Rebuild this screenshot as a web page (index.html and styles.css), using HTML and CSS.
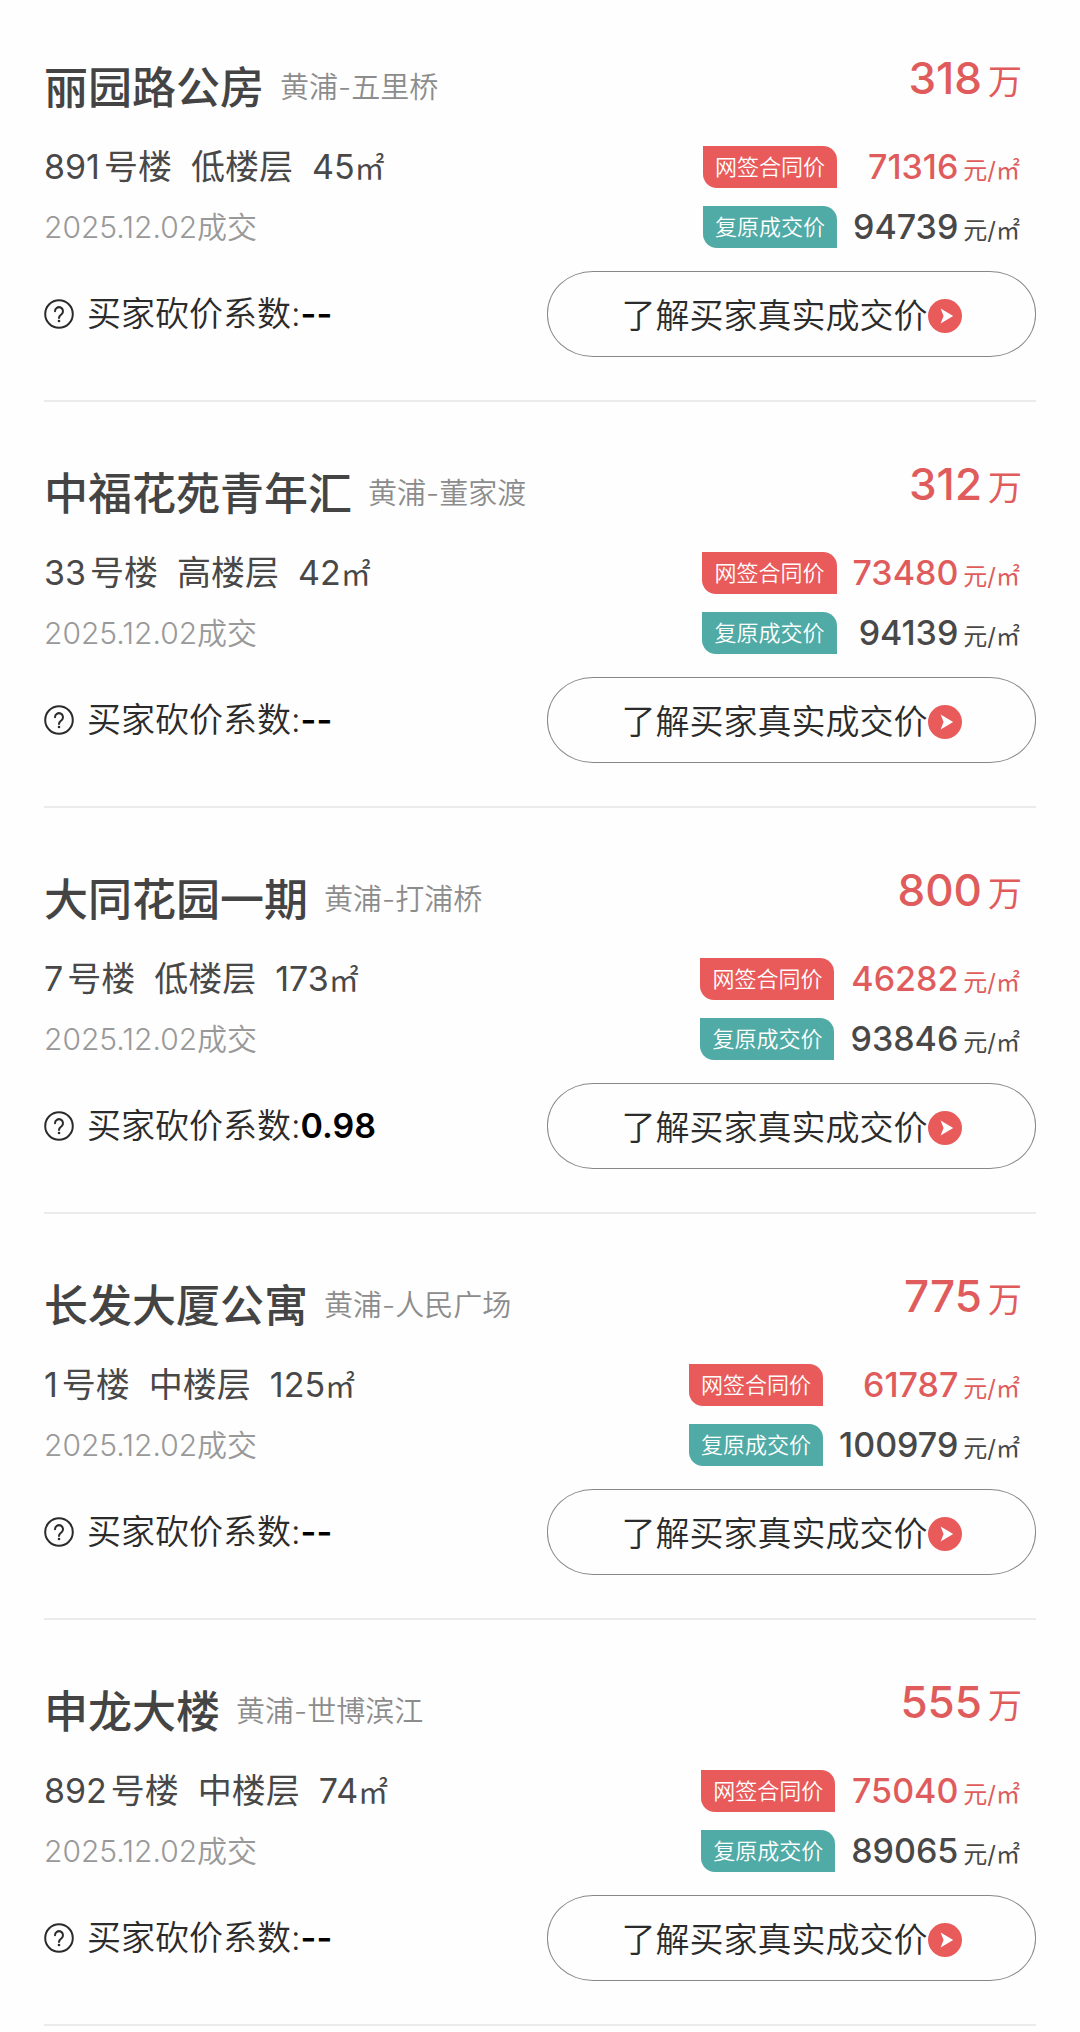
FILE: index.html
```html
<!DOCTYPE html>
<html lang="zh-CN">
<head>
<meta charset="utf-8">
<meta name="viewport" content="width=device-width, initial-scale=1">
<title>成交记录</title>
<link rel="stylesheet" href="styles.css">
</head>
<body>
<svg class="sprite" aria-hidden="true">
  <symbol id="icon-help" viewBox="0 0 30 30">
    <circle cx="15" cy="15" r="13.8" fill="none" stroke="currentColor" stroke-width="2"/>
    <path d="M11 12.2a4 4 0 1 1 6.6 3c-1.6 1.3-2.6 1.9-2.6 3.8" fill="none" stroke="currentColor" stroke-width="2" stroke-linecap="round"/>
    <circle cx="15" cy="22" r="1.3" fill="currentColor"/>
  </symbol>
  <symbol id="icon-go" viewBox="0 0 34 34">
    <circle cx="17" cy="17" r="17" fill="#e95b5b"/>
    <path d="M12.6 9.6 25.2 17 12.6 24.4 15.6 17z" fill="#fff"/>
  </symbol>
</svg>
<ul class="records">
  <li class="record">
    <div class="record-head">
      <h2 class="name">丽园路公房<small class="area">黄浦-五里桥</small></h2>
      <p class="total"><span class="total-num">318</span>万</p>
    </div>
    <div class="record-body">
      <div class="facts">
        <p class="unit"><span><b class="num">891</b>号楼</span><span>低楼层</span><span>45<span class="sqm">㎡</span></span></p>
        <p class="date">2025.12.02成交</p>
      </div>
      <div class="prices">
        <span class="tag tag-signed">网签合同价</span><p class="price price-signed"><span class="price-num">71316</span>元/㎡</p>
        <span class="tag tag-real">复原成交价</span><p class="price"><span class="price-num">94739</span>元/㎡</p>
      </div>
    </div>
    <div class="record-foot">
      <p class="ratio"><button class="help" type="button" aria-label="说明"><svg class="help-icon"><use href="#icon-help"/></svg></button>买家砍价系数:<strong class="ratio-num">--</strong></p>
      <button class="more" type="button">了解买家真实成交价<svg class="more-icon"><use href="#icon-go"/></svg></button>
    </div>
  </li>
  <li class="record">
    <div class="record-head">
      <h2 class="name">中福花苑青年汇<small class="area">黄浦-董家渡</small></h2>
      <p class="total"><span class="total-num">312</span>万</p>
    </div>
    <div class="record-body">
      <div class="facts">
        <p class="unit"><span><b class="num">33</b>号楼</span><span>高楼层</span><span>42<span class="sqm">㎡</span></span></p>
        <p class="date">2025.12.02成交</p>
      </div>
      <div class="prices">
        <span class="tag tag-signed">网签合同价</span><p class="price price-signed"><span class="price-num">73480</span>元/㎡</p>
        <span class="tag tag-real">复原成交价</span><p class="price"><span class="price-num">94139</span>元/㎡</p>
      </div>
    </div>
    <div class="record-foot">
      <p class="ratio"><button class="help" type="button" aria-label="说明"><svg class="help-icon"><use href="#icon-help"/></svg></button>买家砍价系数:<strong class="ratio-num">--</strong></p>
      <button class="more" type="button">了解买家真实成交价<svg class="more-icon"><use href="#icon-go"/></svg></button>
    </div>
  </li>
  <li class="record">
    <div class="record-head">
      <h2 class="name">大同花园一期<small class="area">黄浦-打浦桥</small></h2>
      <p class="total"><span class="total-num">800</span>万</p>
    </div>
    <div class="record-body">
      <div class="facts">
        <p class="unit"><span><b class="num">7</b>号楼</span><span>低楼层</span><span>173<span class="sqm">㎡</span></span></p>
        <p class="date">2025.12.02成交</p>
      </div>
      <div class="prices">
        <span class="tag tag-signed">网签合同价</span><p class="price price-signed"><span class="price-num">46282</span>元/㎡</p>
        <span class="tag tag-real">复原成交价</span><p class="price"><span class="price-num">93846</span>元/㎡</p>
      </div>
    </div>
    <div class="record-foot">
      <p class="ratio"><button class="help" type="button" aria-label="说明"><svg class="help-icon"><use href="#icon-help"/></svg></button>买家砍价系数:<strong class="ratio-num">0.98</strong></p>
      <button class="more" type="button">了解买家真实成交价<svg class="more-icon"><use href="#icon-go"/></svg></button>
    </div>
  </li>
  <li class="record">
    <div class="record-head">
      <h2 class="name">长发大厦公寓<small class="area">黄浦-人民广场</small></h2>
      <p class="total"><span class="total-num">775</span>万</p>
    </div>
    <div class="record-body">
      <div class="facts">
        <p class="unit"><span><b class="num">1</b>号楼</span><span>中楼层</span><span>125<span class="sqm">㎡</span></span></p>
        <p class="date">2025.12.02成交</p>
      </div>
      <div class="prices">
        <span class="tag tag-signed">网签合同价</span><p class="price price-signed"><span class="price-num">61787</span>元/㎡</p>
        <span class="tag tag-real">复原成交价</span><p class="price"><span class="price-num">100979</span>元/㎡</p>
      </div>
    </div>
    <div class="record-foot">
      <p class="ratio"><button class="help" type="button" aria-label="说明"><svg class="help-icon"><use href="#icon-help"/></svg></button>买家砍价系数:<strong class="ratio-num">--</strong></p>
      <button class="more" type="button">了解买家真实成交价<svg class="more-icon"><use href="#icon-go"/></svg></button>
    </div>
  </li>
  <li class="record">
    <div class="record-head">
      <h2 class="name">申龙大楼<small class="area">黄浦-世博滨江</small></h2>
      <p class="total"><span class="total-num">555</span>万</p>
    </div>
    <div class="record-body">
      <div class="facts">
        <p class="unit"><span><b class="num">892</b>号楼</span><span>中楼层</span><span>74<span class="sqm">㎡</span></span></p>
        <p class="date">2025.12.02成交</p>
      </div>
      <div class="prices">
        <span class="tag tag-signed">网签合同价</span><p class="price price-signed"><span class="price-num">75040</span>元/㎡</p>
        <span class="tag tag-real">复原成交价</span><p class="price"><span class="price-num">89065</span>元/㎡</p>
      </div>
    </div>
    <div class="record-foot">
      <p class="ratio"><button class="help" type="button" aria-label="说明"><svg class="help-icon"><use href="#icon-help"/></svg></button>买家砍价系数:<strong class="ratio-num">--</strong></p>
      <button class="more" type="button">了解买家真实成交价<svg class="more-icon"><use href="#icon-go"/></svg></button>
    </div>
  </li>
</ul>
</body>
</html>
```
FILE: styles.css
```css
* {
  box-sizing: border-box;
}

body {
  margin: 0;
  background: #fefefe;
  color: #484848;
  font-family: Inter, "Noto Sans CJK SC", sans-serif;
  font-size: 34px;
}

.sprite {
  display: none;
}

h2,
p,
ul {
  margin: 0;
  padding: 0;
}

.records {
  padding: 0 44px;
  list-style: none;
}

.record {
  padding: 56px 0 43px;
  border-bottom: 2px solid #ebebeb;
}

.record:first-child {
  padding-top: 52px;
}

/* Name and total price */
.record-head {
  display: flex;
  justify-content: space-between;
  padding-right: 14px;
}

.name {
  display: flex;
  align-items: center;
  gap: 16px;
  padding-top: 8px;
  color: #444;
  font-size: 44px;
  font-weight: 500;
  line-height: 56px;
}

.area {
  color: #8c8c8c;
  font-size: 29px;
  font-weight: 350;
}

.total {
  display: flex;
  align-items: baseline;
  gap: 6px;
  color: #e05c5c;
  line-height: 52px;
}

.total-num {
  font-size: 44px;
  font-weight: 500;
}

/* Unit facts and price per square metre */
.record-body {
  display: flex;
  justify-content: space-between;
  padding: 30px 16px 0 0;
}

.facts {
  display: grid;
  grid-template-rows: 42px 42px;
  gap: 18px;
  line-height: 42px;
}

.unit {
  display: flex;
  gap: 19px;
}

.num {
  margin-right: 4px;
  font-weight: 400;
}

.sqm {
  font-size: 30px;
}

.date {
  color: #999;
  font-size: 30px;
  font-weight: 350;
}

.prices {
  display: grid;
  grid-template-columns: auto auto;
  align-items: center;
  gap: 18px 16px;
}

.tag {
  padding: 0 12px;
  border-radius: 0 14px 0 14px;
  color: #fff;
  font-size: 22px;
  font-weight: 350;
  line-height: 42px;
}

.tag-signed {
  background: #e95b5b;
}

.tag-real {
  background: #50aba6;
}

.price {
  display: flex;
  align-items: baseline;
  justify-content: flex-end;
  gap: 5px;
  padding-top: 4px;
  font-size: 24px;
  line-height: 32px;
}

.price-signed {
  color: #e05c5c;
}

.price-num {
  font-size: 34px;
  font-weight: 500;
}

/* Bargaining ratio and details button */
.record-foot {
  display: grid;
  grid-template-columns: 1fr 1fr;
  align-items: center;
  gap: 14px;
  padding-top: 23px;
  color: #2b2b2b;
}

.ratio {
  display: flex;
  align-items: center;
  font-weight: 350;
  line-height: 42px;
}

.ratio-num {
  color: #000;
  font-weight: 600;
}

.help {
  display: flex;
  margin: 0 13px 0 0;
  padding: 0;
  border: 0;
  background: none;
  color: inherit;
}

.help-icon {
  width: 30px;
  height: 30px;
}

.more {
  display: flex;
  align-items: center;
  justify-content: center;
  height: 86px;
  padding: 4px 0 0;
  border: 1px solid #888;
  border-radius: 46px / 42px;
  background: none;
  color: inherit;
  font: inherit;
  font-weight: 350;
  line-height: 42px;
}

.more-icon {
  width: 34px;
  height: 34px;
}
```
